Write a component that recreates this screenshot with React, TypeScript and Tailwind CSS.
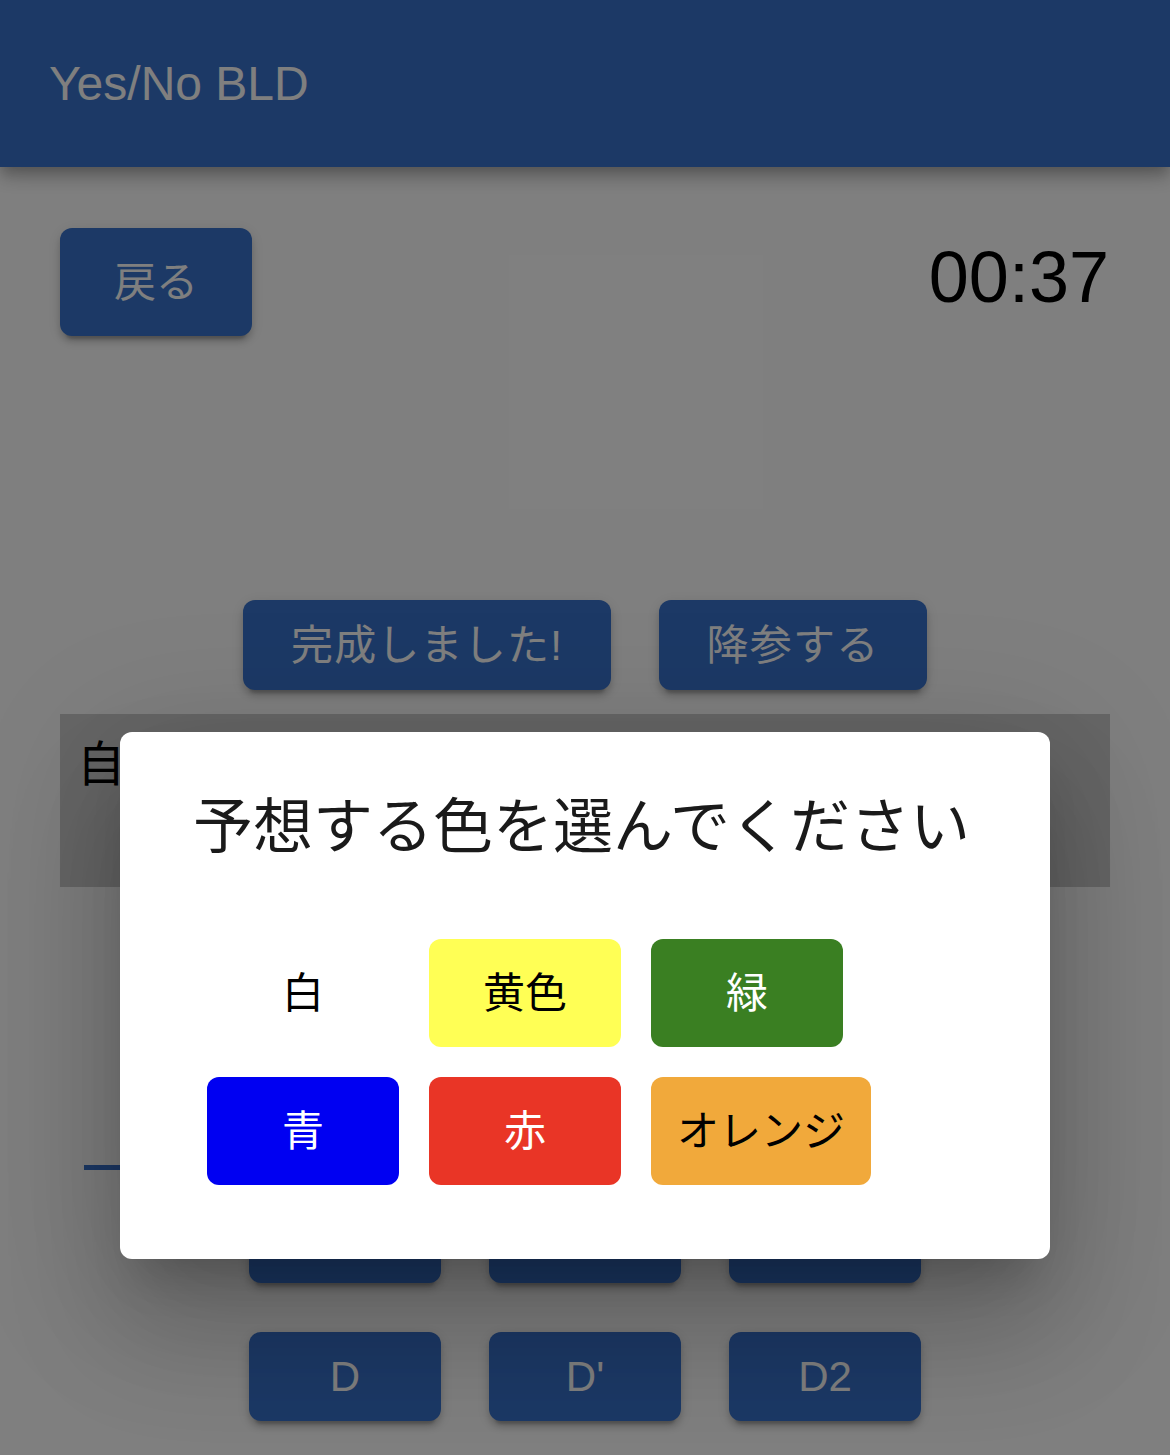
import React from "react";

const jp = "font-['Liberation_Sans','Noto_Sans_CJK_JP',sans-serif]";

const raised =
  "shadow-[0_9px_3px_-6px_rgba(0,0,0,0.2),0_6px_6px_0_rgba(0,0,0,0.14),0_3px_15px_0_rgba(0,0,0,0.12)]";

const colors = [
  [
    { label: "白", cls: "bg-transparent text-black" },
    { label: "黄色", cls: "bg-[#ffff55] text-black" },
    { label: "緑", cls: "bg-[#3a7f22] text-white" },
  ],
  [
    { label: "青", cls: "bg-[#0000f2] text-white" },
    { label: "赤", cls: "bg-[#e93526] text-white" },
    { label: "オレンジ", cls: "bg-[#f1a93b] text-black" },
  ],
];

const moves = [
  ["", "", ""],
  ["D", "D'", "D2"],
];

export default function App() {
  return (
    <div className={`relative min-h-[1455px] w-full overflow-hidden bg-white ${jp}`}>
      <header className="flex h-[167px] items-center bg-[#3873cd] px-[49px] shadow-[0_6px_12px_-3px_rgba(0,0,0,0.2),0_12px_15px_0_rgba(0,0,0,0.14),0_3px_30px_0_rgba(0,0,0,0.12)]">
        <h1 className="text-[48px] leading-none text-white">Yes/No BLD</h1>
      </header>

      <main className="px-[60px] pt-[61px]">
        <div className="flex items-start justify-between">
          <button className={`h-[108px] w-[192px] rounded-[12px] bg-[#3873cd] text-[42px] text-white ${raised}`}>
            戻る
          </button>
          <div className="mr-[1px] mt-[13px] text-[72px] leading-none text-black">00:37</div>
        </div>

        <div className="mt-[264px] flex justify-center gap-[48px]">
          <button className={`h-[90px] w-[368px] rounded-[12px] bg-[#3873cd] text-[42px] tracking-[1.2px] text-white ${raised}`}>
            完成しました!
          </button>
          <button className={`h-[90px] w-[268px] rounded-[12px] bg-[#3873cd] text-[42px] tracking-[1.2px] text-white ${raised}`}>
            降参する
          </button>
        </div>

        <div className="mt-[24px] h-[173px] bg-[#cccccc] px-[17px] pt-[22px] text-[48px] leading-[1.2] text-black">自</div>

        <div className="ml-[24px] mt-[278px] h-[5px] w-[900px] bg-[#3873cd]" />

        <div className="mt-[24px] flex flex-col items-center gap-[49px]">
          {moves.map((row, i) => (
            <div key={i} className="flex gap-[48px]">
              {row.map((m, j) => (
                <button
                  key={j}
                  className={`h-[89px] w-[192px] rounded-[12px] bg-[#3873cd] text-[42px] text-white ${raised}`}
                >
                  {m}
                </button>
              ))}
            </div>
          ))}
        </div>
      </main>

      <div className="absolute inset-0 bg-black/50" />

      <div className="absolute left-[120px] top-[732px] h-[527px] w-[930px] rounded-[12px] bg-white shadow-[0_33px_45px_-21px_rgba(0,0,0,0.2),0_72px_114px_9px_rgba(0,0,0,0.14),0_27px_138px_24px_rgba(0,0,0,0.12)]">
        <h2 className="ml-[73px] mt-[48px] h-[96px] text-[60px] leading-[96px] text-[#1a1a1a]">
          予想する色を選んでください
        </h2>
        <div className="ml-[87px] mt-[63px] flex flex-col gap-[30px]">
          {colors.map((row, i) => (
            <div key={i} className="flex gap-[30px]">
              {row.map((c) => (
                <button
                  key={c.label}
                  className={`h-[108px] min-w-[192px] rounded-[12px] px-[26px] text-[42px] ${c.cls}`}
                >
                  {c.label}
                </button>
              ))}
            </div>
          ))}
        </div>
      </div>
    </div>
  );
}
